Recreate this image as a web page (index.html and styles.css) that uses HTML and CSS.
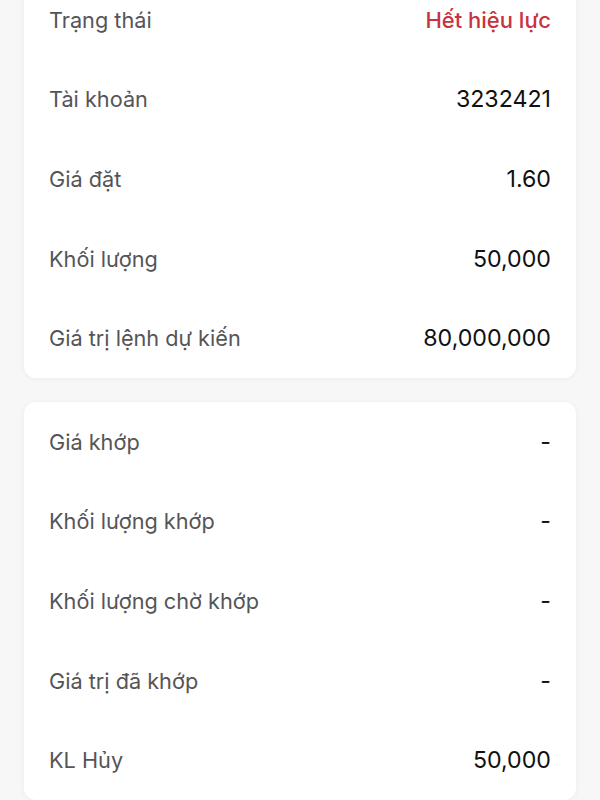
FILE: index.html
```html
<!DOCTYPE html>
<html lang="vi">
  <head>
    <meta charset="UTF-8" />
    <meta name="viewport" content="width=device-width, initial-scale=1.0" />
    <title>Chi tiết lệnh</title>
    <link rel="stylesheet" href="styles.css">
  </head>
  <body>
    <div class="page">
      <div class="card card-top">
        <div class="row">
          <span class="label">Trạng thái</span>
          <span class="value expired">Hết hiệu lực</span>
        </div>
        <div class="row">
          <span class="label">Tài khoản</span>
          <span class="value">3232421</span>
        </div>
        <div class="row">
          <span class="label">Giá đặt</span>
          <span class="value">1.60</span>
        </div>
        <div class="row">
          <span class="label">Khối lượng</span>
          <span class="value">50,000</span>
        </div>
        <div class="row">
          <span class="label">Giá trị lệnh dự kiến</span>
          <span class="value">80,000,000</span>
        </div>
      </div>

      <div class="card">
        <div class="row">
          <span class="label">Giá khớp</span>
          <span class="value">-</span>
        </div>
        <div class="row">
          <span class="label">Khối lượng khớp</span>
          <span class="value">-</span>
        </div>
        <div class="row">
          <span class="label">Khối lượng chờ khớp</span>
          <span class="value">-</span>
        </div>
        <div class="row">
          <span class="label">Giá trị đã khớp</span>
          <span class="value">-</span>
        </div>
        <div class="row">
          <span class="label">KL Hủy</span>
          <span class="value">50,000</span>
        </div>
      </div>
    </div>
  </body>
</html>
```

FILE: styles.css
```css
* {
  margin: 0;
  padding: 0;
  box-sizing: border-box;
}
body {
  background-color: #f7f7f8;
  font-family: "Inter", "Roboto", sans-serif;
  overflow: hidden;
}
.page {
  display: flex;
  flex-direction: column;
  gap: 24px;
  padding: 0 24px;
}
.card {
  background-color: #ffffff;
  border-radius: 12px;
  box-shadow: 0 1px 6px rgba(0, 0, 0, 0.05);
  padding: 0 25px;
}
.card-top {
  margin-top: -20px;
}
.row {
  display: flex;
  justify-content: space-between;
  align-items: center;
  height: 79.6px;
}
.label {
  color: #555558;
  font-size: 21.7px;
}
.value {
  color: #111111;
  font-size: 23.2px;
}
.value.expired {
  color: #c9323f;
  font-size: 22px;
  font-weight: 500;
}
```
